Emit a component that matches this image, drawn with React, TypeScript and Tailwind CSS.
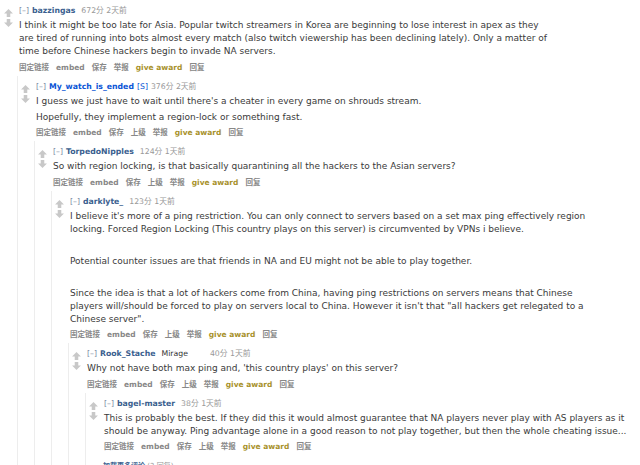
import React from 'react';

type Comment = {
  author: string;
  submitter?: boolean;
  flair?: string;
  score: string;
  time: string;
  paras: string[];
  top?: boolean;
  children?: Comment[];
  more?: boolean;
};

const thread: Comment = {
  author: 'bazzingas',
  score: '672分',
  time: '2天前',
  top: true,
  paras: [
    'I think it might be too late for Asia. Popular twitch streamers in Korea are beginning to lose interest in apex as they are tired of running into bots almost every match (also twitch viewership has been declining lately). Only a matter of time before Chinese hackers begin to invade NA servers.',
  ],
  children: [
    {
      author: 'My_watch_is_ended',
      submitter: true,
      score: '376分',
      time: '2天前',
      paras: [
        "I guess we just have to wait until there's a cheater in every game on shrouds stream.",
        'Hopefully, they implement a region-lock or something fast.',
      ],
      children: [
        {
          author: 'TorpedoNipples',
          score: '124分',
          time: '1天前',
          paras: ['So with region locking, is that basically quarantining all the hackers to the Asian servers?'],
          children: [
            {
              author: 'darklyte_',
              score: '123分',
              time: '1天前',
              paras: [
                "I believe it's more of a ping restriction. You can only connect to servers based on a set max ping effectively region locking. Forced Region Locking (This country plays on this server) is circumvented by VPNs i believe.",
                '\u00a0',
                'Potential counter issues are that friends in NA and EU might not be able to play together.',
                '\u00a0',
                'Since the idea is that a lot of hackers come from China, having ping restrictions on servers means that Chinese players will/should be forced to play on servers local to China. However it isn\'t that "all hackers get relegated to a Chinese server".',
              ],
              children: [
                {
                  author: 'Rook_Stache',
                  flair: 'Mirage',
                  score: '40分',
                  time: '1天前',
                  paras: ["Why not have both max ping and, 'this country plays' on this server?"],
                  more: true,
                  children: [
                    {
                      author: 'bagel-master',
                      score: '38分',
                      time: '1天前',
                      paras: [
                        'This is probably the best. If they did this it would almost guarantee that NA players never play with AS players as it should be anyway. Ping advantage alone in a good reason to not play together, but then the whole cheating issue...',
                      ],
                    },
                  ],
                },
              ],
            },
          ],
        },
      ],
    },
  ],
};

const font = { fontFamily: '"DejaVu Sans", Verdana, "Noto Sans CJK SC", sans-serif' };

const Arrow = ({ down }: { down?: boolean }) => (
  <svg width="9" height="8" viewBox="0 0 10 9" className={down ? 'rotate-180' : ''}>
    <polygon points="5,0 10,5 7,5 7,9 3,9 3,5 0,5" fill="#c8c8c8" />
  </svg>
);

const CommentRow = ({ c }: { c: Comment }) => {
  const actions = c.top
    ? ['固定链接', 'embed', '保存', '举报']
    : ['固定链接', 'embed', '保存', '上级', '举报'];
  return (
    <div>
      <div className="flex pt-[5px]">
        <div className="w-[18px] shrink-0 flex flex-col gap-[2px] pl-[3px] pt-[4px]">
          <Arrow />
          <Arrow down />
        </div>
        <div className="flex-1 min-w-0">
          <div className="h-[12px] leading-[12px] text-[7.75px] whitespace-nowrap flex items-center">
            <span className="text-[#7d8aa3] mr-[3px]">[–]</span>
            <span
              className={
                c.submitter ? 'font-bold text-[#0a55d6] mr-[3px]' : 'font-bold text-[#3b5f8f] mr-[6px]'
              }
            >
              {c.author}
            </span>
            {c.submitter && <span className="text-[#0a55d6] mr-[3px]">[S]</span>}
            {c.flair && <span className="text-[#333] mr-[22px]">{c.flair}</span>}
            <span className="text-[#999]">
              {c.score} {c.time}
            </span>
          </div>
          <div className="mt-[2px] max-w-[535px] text-[9px] leading-[13px] text-[#3a3a3a]">
            {c.paras.map((p, i) => (
              <p key={i} className={i > 0 ? 'mt-[3px]' : ''}>
                {p}
              </p>
            ))}
          </div>
          <div className="mt-[3.5px] h-[12px] leading-[12px] text-[7.5px] font-bold text-[#888] flex gap-[7px] whitespace-nowrap">
            {actions.map((a) => (
              <span key={a}>{a}</span>
            ))}
            <span className="text-[#a8922c]">give award</span>
            <span>回复</span>
          </div>
        </div>
      </div>
      {c.children && (
        <div className="mt-[2px] ml-[16px] border-l border-[#ededed]">
          {c.children.map((ch) => (
            <CommentRow key={ch.author} c={ch} />
          ))}
          {c.more && (
            <div className="pl-[17px] mt-[8px] text-[7px] leading-[10px] whitespace-nowrap">
              <span className="font-bold text-[#3b5f8f]">加载更多评论</span>
              <span className="text-[#999]"> (2 回复)</span>
            </div>
          )}
        </div>
      )}
    </div>
  );
};

export default function App() {
  return (
    <div className="w-[640px] h-[465px] overflow-hidden bg-white pl-[1px]" style={font}>
      <CommentRow c={thread} />
    </div>
  );
}
